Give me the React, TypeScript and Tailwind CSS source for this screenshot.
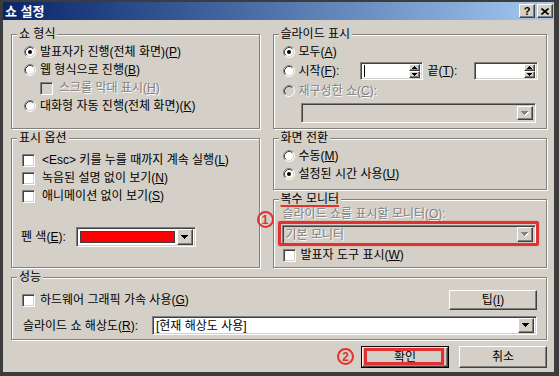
import React from 'react';

const raised =
  'bg-[#d4d0c8] border border-t-white border-l-white border-b-[#404040] border-r-[#404040] shadow-[inset_-1px_-1px_0_#808080]';
const sunken =
  'border border-t-[#808080] border-l-[#808080] border-b-white border-r-white shadow-[inset_1px_1px_0_#404040,inset_-1px_-1px_0_#d4d0c8]';
const dim = 'text-[#808080] [text-shadow:1px_1px_0_#fff]';

function Radio({ checked = false, disabled = false }: { checked?: boolean; disabled?: boolean }) {
  return (
    <svg width="12" height="12" viewBox="0 0 12 12" className="shrink-0">
      <circle cx="6" cy="6" r="5" fill={disabled ? '#d4d0c8' : '#fff'} />
      <path d="M2.11 9.89 A5.5 5.5 0 0 1 9.89 2.11" stroke="#808080" fill="none" />
      <path d="M9.89 2.11 A5.5 5.5 0 0 1 2.11 9.89" stroke="#fff" fill="none" />
      <path d="M2.82 9.18 A4.5 4.5 0 0 1 9.18 2.82" stroke="#404040" fill="none" />
      <path d="M9.18 2.82 A4.5 4.5 0 0 1 2.82 9.18" stroke="#d4d0c8" fill="none" />
      {checked && <circle cx="6" cy="6" r="2" fill="#000" />}
    </svg>
  );
}

function Check({ disabled = false }: { disabled?: boolean }) {
  return <div className={`w-[13px] h-[13px] shrink-0 ${sunken} ${disabled ? 'bg-[#d4d0c8]' : 'bg-white'}`} />;
}

function DownArrow({ disabled = false }: { disabled?: boolean }) {
  return (
    <svg width="8" height="5" viewBox="0 0 8 5" shapeRendering="crispEdges">
      {disabled && <path d="M1 1h7v1H1zM2 2h5v1H2zM3 3h3v1H3zM4 4h1v1H4z" fill="#fff" />}
      <path d="M0 0h7v1H0zM1 1h5v1H1zM2 2h3v1H2zM3 3h1v1H3z" fill={disabled ? '#808080' : '#000'} />
    </svg>
  );
}

function DropButton({ disabled = false }: { disabled?: boolean }) {
  return (
    <div className={`w-[16px] h-full flex items-center justify-center ${raised}`}>
      <DownArrow disabled={disabled} />
    </div>
  );
}

function Spin({ caret = false }: { caret?: boolean }) {
  return (
    <div className={`flex h-[18px] bg-white ${sunken} p-[2px]`}>
      <div className="flex-1 flex items-center pl-[1px]">
        {caret && <div className="w-px h-[12px] bg-black" />}
      </div>
      <div className="flex flex-col w-[11px] -my-[1px]">
        <div className={`flex-1 flex items-center justify-center ${raised}`}>
          <svg width="5" height="3" viewBox="0 0 5 3" shapeRendering="crispEdges">
            <path d="M2 0h1v1H2zM1 1h3v1H1zM0 2h5v1H0z" fill="#000" />
          </svg>
        </div>
        <div className={`flex-1 flex items-center justify-center ${raised}`}>
          <svg width="5" height="3" viewBox="0 0 5 3" shapeRendering="crispEdges">
            <path d="M0 0h5v1H0zM1 1h3v1H1zM2 2h1v1H2z" fill="#000" />
          </svg>
        </div>
      </div>
    </div>
  );
}

function Group({ title, className = '', children }: { title: React.ReactNode; className?: string; children: React.ReactNode }) {
  return (
    <fieldset
      className={`relative min-w-0 border border-[#808080] shadow-[inset_1px_1px_0_#fff,1px_1px_0_#fff] ${className}`}
    >
      <legend className="ml-[5px] px-[2px] leading-[14px] bg-[#d4d0c8]">{title}</legend>
      {children}
    </fieldset>
  );
}

function Marker({ n }: { n: string }) {
  return (
    <div className="w-[17px] h-[17px] rounded-full border-2 border-[#e0322f] flex items-center justify-center text-[#e0322f] font-bold text-[12px] leading-none">
      {n}
    </div>
  );
}

export default function App() {
  return (
    <div className="w-[559px] h-[376px] bg-[#d4d0c8] border-[#3c3c3c] border-l-[3px] border-t-[2px] border-r-[5px] border-b-[4px] flex flex-col text-[12px] text-black font-['Liberation_Sans','Noto_Sans_CJK_KR',sans-serif] overflow-hidden">
      <div className="h-[18px] shrink-0 flex items-center bg-linear-to-r from-[#0a246a] to-[#a6caf0] pl-[2px] pr-[1px]">
        <span className="text-white font-bold text-[13px] leading-none">쇼 설정</span>
        <div className="ml-auto flex gap-[2px]">
          <div className={`w-[16px] h-[14px] flex items-center justify-center font-bold text-[11px] leading-none ${raised}`}>?</div>
          <div className={`w-[16px] h-[14px] flex items-center justify-center ${raised}`}>
            <svg width="8" height="7" viewBox="0 0 8 7">
              <path d="M0.5 0.5L7.5 6.5M7.5 0.5L0.5 6.5" stroke="#000" strokeWidth="1.6" />
            </svg>
          </div>
        </div>
      </div>

      <div className="flex-1 flex flex-col pl-[8px] pr-[7px] pt-[7px]">
        <div className="flex gap-[13px]">
          {/* left column */}
          <div className="w-[249px] flex flex-col">
            <Group title="쇼 형식" className="h-[102px]">
              <div className="pl-[12px] pt-[2px]">
                <div className="h-[18px] flex items-center gap-[4px]">
                  <Radio checked />
                  <span>발표자가 진행(전체 화면)(<u>P</u>)</span>
                </div>
                <div className="h-[18px] flex items-center gap-[4px]">
                  <Radio />
                  <span>웹 형식으로 진행(<u>B</u>)</span>
                </div>
                <div className="h-[18px] flex items-center gap-[6px] pl-[16px]">
                  <Check disabled />
                  <span className={dim}>스크롤 막대 표시(<u>H</u>)</span>
                </div>
                <div className="h-[18px] flex items-center gap-[4px]">
                  <Radio />
                  <span>대화형 자동 진행(전체 화면)(<u>K</u>)</span>
                </div>
              </div>
            </Group>

            <Group title="표시 옵션" className="mt-[2px] h-[137px]">
              <div className="pl-[10px] pt-[6px]">
                <div className="h-[18px] flex items-center gap-[7px]">
                  <Check />
                  <span>&lt;Esc&gt; 키를 누를 때까지 계속 실행(<u>L</u>)</span>
                </div>
                <div className="h-[18px] flex items-center gap-[7px]">
                  <Check />
                  <span>녹음된 설명 없이 보기(<u>N</u>)</span>
                </div>
                <div className="h-[18px] flex items-center gap-[7px]">
                  <Check />
                  <span>애니메이션 없이 보기(<u>S</u>)</span>
                </div>
                <div className="mt-[22px] h-[20px] flex items-center -ml-[1px]">
                  <span className="w-[55px]">펜 색(<u>E</u>):</span>
                  <div className={`w-[120px] h-[20px] flex items-center bg-white ${sunken} p-[2px]`}>
                    <div className="flex-1 h-[12px] mx-[1px] bg-[#ff0000] border border-[#404040]" />
                    <div className="h-[16px] ml-[1px]">
                      <DropButton />
                    </div>
                  </div>
                </div>
              </div>
            </Group>
          </div>

          {/* right column */}
          <div className="w-[275px] flex flex-col">
            <Group title="슬라이드 표시" className="h-[102px]">
              <div className="pl-[9px] pt-[2px]">
                <div className="h-[18px] flex items-center gap-[4px]">
                  <Radio checked />
                  <span>모두(<u>A</u>)</span>
                </div>
                <div className="h-[20px] flex items-center">
                  <Radio />
                  <span className="ml-[4px] w-[61px]">시작(<u>F</u>):</span>
                  <div className="w-[63px]">
                    <Spin caret />
                  </div>
                  <span className="ml-[5px] w-[46px]">끝(<u>T</u>):</span>
                  <div className="w-[64px]">
                    <Spin />
                  </div>
                </div>
                <div className="h-[20px] flex items-center gap-[4px]">
                  <Radio disabled />
                  <span className={dim}>재구성한 쇼(<u>C</u>):</span>
                </div>
                <div className={`ml-[18px] mt-[2px] w-[235px] h-[20px] flex justify-end bg-[#d4d0c8] ${sunken} p-[2px]`}>
                  <DropButton disabled />
                </div>
              </div>
            </Group>

            <Group title="화면 전환" className="mt-[2px] h-[59px]">
              <div className="pl-[9px] pt-[2px]">
                <div className="h-[18px] flex items-center gap-[4px]">
                  <Radio />
                  <span>수동(<u>M</u>)</span>
                </div>
                <div className="h-[18px] flex items-center gap-[4px]">
                  <Radio checked />
                  <span>설정된 시간 사용(<u>U</u>)</span>
                </div>
              </div>
            </Group>

            <Group
              title={
                <span className="underline decoration-[#e0322f] decoration-2 underline-offset-[2px]">복수 모니터</span>
              }
              className="mt-[2px] h-[76px]"
            >
              <div className="absolute -left-[17px] top-[5px]">
                <Marker n="1" />
              </div>
              <div className="pl-[9px]">
                <div className={`h-[16px] flex items-center ${dim}`}>
                  슬라이드 쇼를 표시할 모니터(<u>O</u>):
                </div>
                <div className="relative mt-[3px] -ml-[1px] w-[254px] h-[19px]">
                  <div className={`w-full h-full flex items-center bg-[#d4d0c8] ${sunken} p-[2px]`}>
                    <span className={`flex-1 pl-[1px] ${dim}`}>기본 모니터</span>
                    <div className="h-[15px]">
                      <DropButton disabled />
                    </div>
                  </div>
                  <div className="absolute -left-[4px] -right-[3px] -top-[4px] -bottom-[2px] border-[3px] border-[#e0322f] rounded-[2px] shadow-[0_0_2px_#f08a8a]" />
                </div>
                <div className="mt-[2px] h-[18px] flex items-center gap-[5px]">
                  <Check />
                  <span>발표자 도구 표시(<u>W</u>)</span>
                </div>
              </div>
            </Group>
          </div>
        </div>

        <Group title="성능" className="mt-[2px] h-[70px]">
          <div className="pl-[10px] pr-[9px] pt-[6px]">
            <div className="h-[20px] flex items-center">
              <Check />
              <span className="ml-[5px]">하드웨어 그래픽 가속 사용(<u>G</u>)</span>
              <div className={`ml-auto w-[88px] h-[20px] flex items-center justify-center ${raised}`}>
                팁(<u>I</u>)
              </div>
            </div>
            <div className="mt-[6px] h-[19px] flex items-center">
              <span className="w-[130px] pl-[1px]">슬라이드 쇼 해상도(<u>R</u>):</span>
              <div className={`flex-1 h-[19px] flex items-center bg-white ${sunken} p-[2px]`}>
                <span className="flex-1 pl-[1px]">[현재 해상도 사용]</span>
                <div className="h-[15px]">
                  <DropButton />
                </div>
              </div>
            </div>
          </div>
        </Group>

        <div className="mt-[6px] flex justify-end gap-[10px]">
          <div className="relative">
            <div className="absolute -left-[24px] top-[2px]">
              <Marker n="2" />
            </div>
            <div className="w-[88px] h-[22px] border border-black">
              <div className={`relative w-full h-full flex items-center justify-center ${raised}`}>
                확인
                <div className="absolute left-[1px] right-[3px] top-0 bottom-[1px] border-[3px] border-[#e0322f] shadow-[0_0_2px_#f08a8a]" />
              </div>
            </div>
          </div>
          <div className={`w-[88px] h-[22px] flex items-center justify-center ${raised}`}>취소</div>
        </div>
      </div>
    </div>
  );
}
